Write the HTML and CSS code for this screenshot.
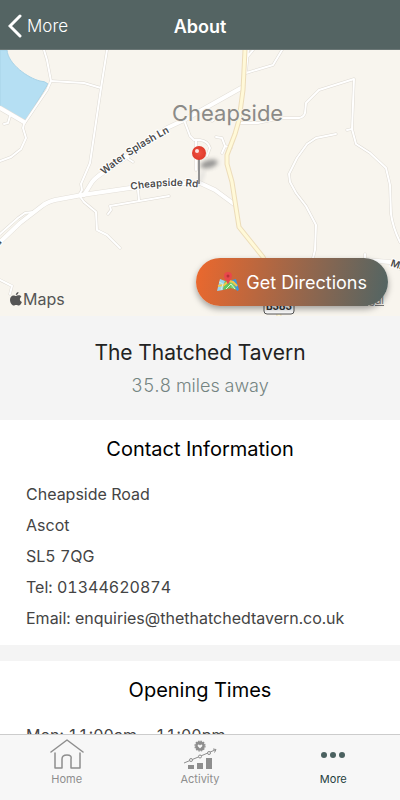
FILE: index.html
```html
<!DOCTYPE html>
<html lang="en">
<head>
  <meta charset="UTF-8">
  <meta name="viewport" content="width=device-width, initial-scale=1.0">
  <title>About</title>
  <link rel="stylesheet" href="styles.css">
</head>
<body>
  <header class="topbar">
    <button class="back" type="button">
      <svg width="14" height="24" viewBox="0 0 14 24" aria-hidden="true"><path d="M12 2 2 12l10 10" fill="none" stroke="currentColor" stroke-width="3" stroke-linecap="round"/></svg>
      More
    </button>
    <h1>About</h1>
  </header>

  <main>
    <div class="map">
      <svg class="map-canvas" viewBox="0 50 400 266" preserveAspectRatio="xMidYMid slice" role="img" aria-label="Map of Cheapside">
        <defs>
          <g id="lanes">
            <path d="M44 50l3 10 4 21-4 9-23 34-1 4 3 10-5 11-10 8-11 4M10 116l-2 7-4 1"/>
            <path d="M51 81l33 2 17 5M107 50l-6 38-11 75-9 21 1 6-3 5 5 7 12 10 1 18 10 5 13 13"/>
            <path d="M124 156l9 6M138 190l1 10M169 196l-59 10 1 4-3 4M0 234l18-16 7-5 8-1M0 280l12 6-2 8"/>
            <path d="M184 120l6 16 4 4h6q8 1 10 8l-3 8M196 140v30"/>
            <path d="M248 50l-2 23 27-8 9-15M253 50l-5 6M212 121l6-4"/>
            <path d="M240 123h18l23-5h18q5-1 6-5l1-10 13-13 35-11-2 50 4 15 14 9 16 15 4 17 1 29q2 14 9 28M352 129l-5 1"/>
            <path d="M336 134l-20 4-9 6-10 14-8 16 1 8 6 11 10 13 10 19-1 25-3 12M365 254v8"/>
            <path d="M216 137l6 1 3 8 6 2M225 146l-3 7"/>
          </g>
          <g id="roads">
            <path d="M0 108l24 14"/>
            <path d="M84 195l8-13q4-5 12-10l21-14 42-30 17-8 57-32"/>
            <path d="M0 242l20-19 22-17q5-4 13-6l27-5 48-7 45-5h25l15 7 19 14"/>
            <path d="M365 260l25 2 10 6"/>
          </g>
          <path id="high-street" d="M245 50l-2 40-4 30-4 14-8 21v9l5 18 7 45 24 30 12 24 4 35"/>
          <path id="splash" d="M104 175Q133 151 172 131"/>
          <path id="cheapside" d="M131 190Q170 183 202 188"/>
          <filter id="soft" x="-50%" y="-50%" width="200%" height="200%"><feGaussianBlur stdDeviation="2"/></filter>
          <radialGradient id="pin"><stop offset="0" stop-color="#f0503f"/><stop offset="1" stop-color="#df3b2c"/></radialGradient>
        </defs>

        <rect y="50" width="400" height="266" fill="#f8f5ee"/>
        <path class="lake" d="M0 50h7c1 14 21 28 33 31q5 0 8 3l-23 38-25-15z"/>
        <use href="#lanes" class="lane-edge"/>
        <use href="#roads" class="road-edge"/>
        <use href="#lanes" class="lane"/>
        <use href="#roads" class="road"/>
        <use href="#high-street" class="high-edge"/>
        <use href="#high-street" class="high"/>

        <text class="place" x="172" y="121">Cheapside</text>
        <text class="street"><textPath href="#splash">Water Splash Ln</textPath></text>
        <text class="street"><textPath href="#cheapside">Cheapside Rd</textPath></text>
        <text class="street" transform="translate(-2 247) rotate(-48)">d</text>
        <text class="street" transform="translate(390 266) rotate(18)">Mill</text>

        <rect x="264" y="298" width="30" height="16" rx="3" fill="#fff" stroke="#555"/>
        <text class="route" x="279" y="310">B383</text>

        <ellipse cx="209" cy="164" rx="9" ry="4" transform="rotate(-15 209 164)" fill="#777" opacity=".75" filter="url(#soft)"/>
        <path d="M199 184l5-13" stroke="#ccc" stroke-width="2" filter="url(#soft)"/>
        <path d="M199 158v26" stroke="#929292" stroke-width="2"/>
        <circle cx="199" cy="153" r="7" fill="url(#pin)"/>
        <circle cx="197" cy="151" r="2" fill="#fff" opacity=".85"/>
      </svg>

      <div class="map-brand">
        <svg width="12" height="14" viewBox="0 0 12 14" aria-hidden="true"><path d="M8.500 0c.1 1.500-1 3-2.700 3C5.700 1.600 7 .2 8.500 0zM6 4c.7 0 1.400-.7 2.800-.7 1 0 2 .5 2.600 1.400-2.200 1.300-1.900 4.200.5 5.200-.6 1.700-1.900 3.700-3.200 3.700-.9 0-1.300-.5-2.500-.5s-1.600.5-2.500.5C2.100 13.600 0 10.800 0 7.800c0-2.800 1.700-4.400 3.400-4.400 1.200 0 2 .6 2.600.6z" fill="currentColor"/></svg>
        <span>Maps</span>
      </div>
      <a class="legal" href="#">Legal</a>
      <button class="directions" type="button">
        <svg width="22" height="20" viewBox="0 0 22 20" aria-hidden="true">
          <path d="M3 7l5 2-2 9-6 1z" fill="#9bd3ef"/>
          <path d="M8 9l4-2 2 9-8 2z" fill="#62c95f"/>
          <path d="M12 7l3 2 5 9-6-2z" fill="#75d671"/>
          <path d="M15 8l4-1 3 11-2 1z" fill="#3f96dd"/>
          <path d="M1 14l6-1 5-4 4 1 4 4" fill="none" stroke="#f4c64b" stroke-width="2"/>
          <path d="M2 10l4 2-2 6M9 17l5-5 4 5" fill="none" stroke="#d9f1d3"/>
          <path d="M11 13C10 9 7 7 7 4a4 4 0 0 1 8 0c0 3-3 5-4 9z" fill="#e8484b"/>
          <circle cx="11" cy="4" r="1.500" fill="#b93238"/>
        </svg>
        Get Directions
      </button>
    </div>

    <section class="venue">
      <h2>The Thatched Tavern</h2>
      <p>35.8 miles away</p>
    </section>

    <section class="card">
      <h3>Contact Information</h3>
      <p>Cheapside Road</p>
      <p>Ascot</p>
      <p>SL5 7QG</p>
      <p>Tel: 01344620874</p>
      <p>Email: enquiries@thethatchedtavern.co.uk</p>
    </section>

    <section class="card">
      <h3>Opening Times</h3>
      <p>Mon: 11:00am - 11:00pm</p>
    </section>
  </main>

  <nav class="tabs">
    <a href="#">
      <svg width="34" height="32" viewBox="0 0 34 32" fill="none" stroke="currentColor" stroke-width="1.500" stroke-linecap="round" stroke-linejoin="round" aria-hidden="true"><path d="M1 13 17 1l16 12M5 14v15h7V20q0-4 5-4t4 4v9h9V14"/></svg>
      Home
    </a>
    <a href="#">
      <svg width="34" height="32" viewBox="0 0 34 32" fill="currentColor" aria-hidden="true">
        <circle cx="17" cy="7" r="4.800"/>
        <circle cx="17" cy="7" r="5" fill="none" stroke="currentColor" stroke-width="1.200" stroke-dasharray="1.600 1"/>
        <path d="M17 9.500l-2.200-2.300q-.6-1.500.7-1.700 1 0 1.500.9.500-.9 1.500-.9 1.300.2.700 1.700z" fill="#f7f7f7"/>
        <path d="M1 24 32 11M30 10l3 .5-1.500 3" fill="none" stroke="currentColor"/>
        <g fill="#f7f7f7" stroke="currentColor"><circle cx="8" cy="21" r="1.500"/><circle cx="17" cy="17.500" r="1.500"/><circle cx="26" cy="14" r="1.500"/></g>
        <path d="M5 26h6v4H5zM14 24h6v6h-6zM23 19h6v11h-6z"/>
      </svg>
      Activity
    </a>
    <a class="active" href="#">
      <svg width="34" height="32" viewBox="0 0 34 32" fill="#4b6160" aria-hidden="true"><circle cx="8" cy="16" r="3"/><circle cx="17" cy="16" r="3"/><circle cx="26" cy="16" r="3"/></svg>
      More
    </a>
  </nav>
</body>
</html>
```

FILE: styles.css
```css
* {
  box-sizing: border-box;
}
body {
  margin: 0;
  height: 100vh;
  display: flex;
  flex-direction: column;
  font-family: Inter, "Liberation Sans", sans-serif;
  font-variant-numeric: tabular-nums;
  background: #f4f4f4;
  color: #444;
}
h1, h2, h3, p {
  margin: 0;
}
button {
  border: none;
  font-family: inherit;
  cursor: pointer;
}

/* top bar */
.topbar {
  display: grid;
  grid-template-columns: 1fr auto 1fr;
  align-items: center;
  flex: none;
  padding: 3px 8px 0;
  height: 50px;
  background: #546463;
  border-bottom: 1px solid #6b7776;
  color: #fff;
}
.topbar h1 {
  font-size: 18px;
  font-weight: 600;
}
.back {
  display: flex;
  align-items: center;
  justify-self: start;
  gap: 5px;
  padding: 0;
  background: none;
  color: #fff;
  font-size: 17px;
  font-weight: 300;
}

main {
  flex: 1;
  min-height: 0;
  overflow-y: auto;
  scrollbar-width: none;
}

/* map */
.map {
  position: relative;
}
.map-canvas {
  display: block;
  width: 100%;
  height: 266px;
}
.lake {
  fill: #b5dff3;
  stroke: #a8d3e8;
}
.lane-edge, .road-edge, .lane, .road, .high-edge, .high {
  fill: none;
  stroke-linejoin: round;
  stroke-linecap: round;
}
.lane-edge {
  stroke: #dedad3;
  stroke-width: 3px;
}
.lane {
  stroke: #fff;
  stroke-width: 2px;
}
.road-edge {
  stroke: #e3dfd8;
  stroke-width: 5px;
}
.road {
  stroke: #fff;
  stroke-width: 4px;
}
.high-edge {
  stroke: #ecdcb9;
  stroke-width: 5px;
}
.high {
  stroke: #fff9d8;
  stroke-width: 3px;
}
.place {
  font-size: 22px;
  fill: #8b8a87;
  stroke: #f8f5ee;
  stroke-width: 2px;
  paint-order: stroke;
}
.street {
  font-size: 10px;
  font-weight: 600;
  fill: #4a4a4a;
  stroke: #fff;
  stroke-width: 2px;
  paint-order: stroke;
}
.route {
  font-size: 10px;
  font-weight: 700;
  text-anchor: middle;
  fill: #333;
}
.map-brand {
  position: absolute;
  left: 10px;
  bottom: 7px;
  display: flex;
  align-items: center;
  gap: 1px;
  color: #555;
  font-size: 16px;
  line-height: 20px;
}
.legal {
  position: absolute;
  right: 16px;
  bottom: 9px;
  color: #777;
  font-size: 11px;
}
.directions {
  position: absolute;
  right: 12px;
  bottom: 10px;
  display: flex;
  align-items: center;
  gap: 7px;
  height: 48px;
  padding: 0 21px;
  border-radius: 24px;
  background: linear-gradient(100deg, #ec682d, #516564);
  box-shadow: 0 3px 6px rgba(0, 0, 0, 0.35);
  color: #fff;
  font-size: 18px;
  font-weight: 400;
  white-space: nowrap;
}

/* venue */
.venue {
  padding: 20px 16px 18px;
  text-align: center;
}
.venue h2 {
  font-size: 21px;
  font-weight: 400;
  line-height: 34px;
  color: #222;
}
.venue p {
  font-size: 18px;
  font-weight: 300;
  line-height: 32px;
  color: #748482;
}

.card {
  padding: 14px 26px 11px;
  margin-bottom: 16px;
  background: #fff;
}
.card h3 {
  margin-bottom: 15px;
  font-size: 20px;
  font-weight: 400;
  line-height: 30px;
  text-align: center;
  color: #000;
}
.card p {
  font-size: 16px;
  font-weight: 400;
  line-height: 31px;
}

/* bottom tabs */
.tabs {
  display: grid;
  grid-template-columns: repeat(3, 1fr);
  flex: none;
  height: 66px;
  padding-top: 4px;
  background: #f7f7f7;
  border-top: 1px solid #ccc;
}
.tabs a {
  display: flex;
  flex-direction: column;
  align-items: center;
  color: #8e8e8e;
  font-size: 11px;
  line-height: 16px;
  text-decoration: none;
}
.tabs .active {
  color: #25403e;
}
```
